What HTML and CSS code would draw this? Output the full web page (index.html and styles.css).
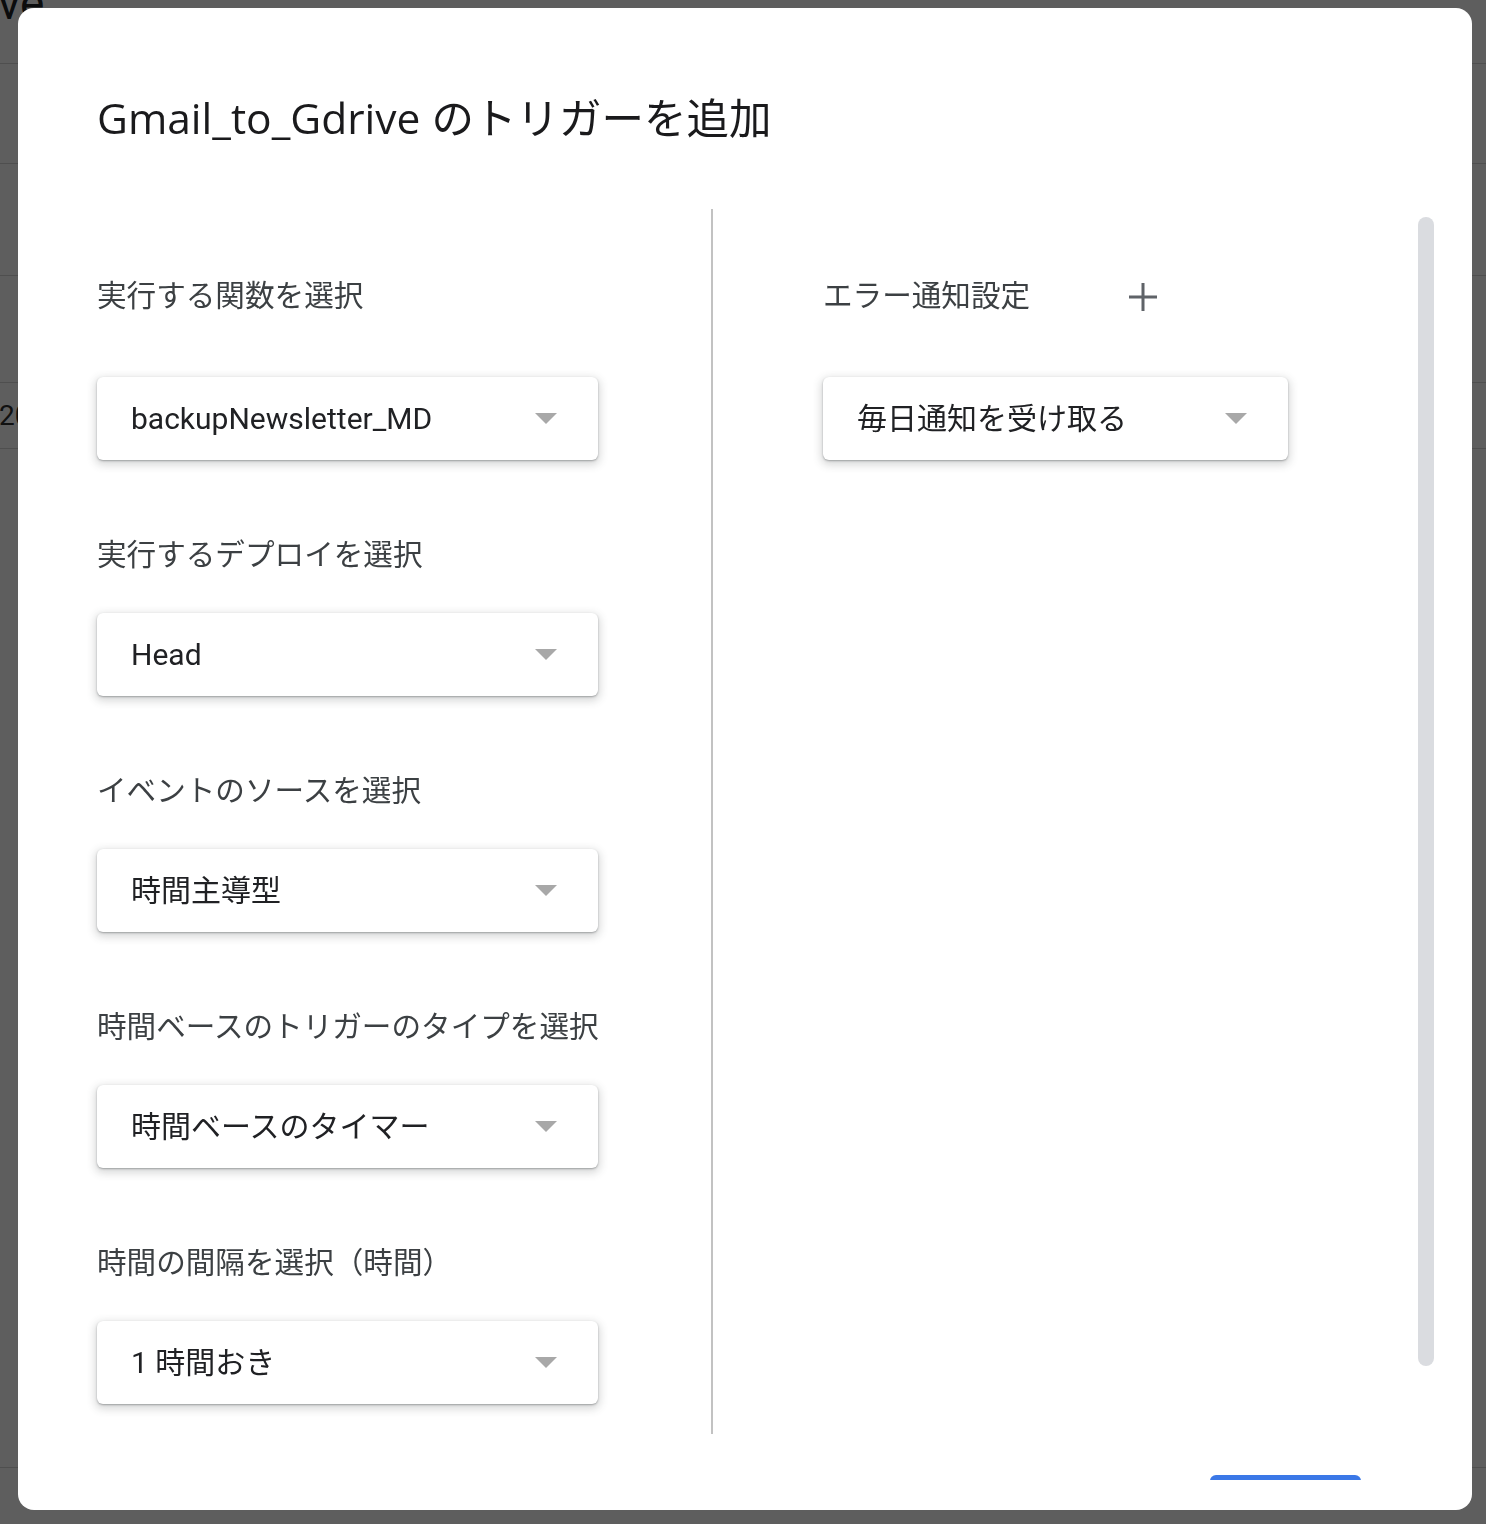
FILE: index.html
```html
<!DOCTYPE html>
<html lang="ja">
<head>
    <meta charset="UTF-8">
    <title>トリガーを追加</title>
    <meta name="viewport" content="width=device-width,initial-scale=1">
    <link rel="stylesheet" href="styles.css">
</head>
<body>
    <!-- page behind the dialog -->
    <div class="page">
        <div class="page-header"><span class="page-title">ve</span></div>
        <div class="page-row row-a"></div>
        <div class="page-row row-b"></div>
        <div class="page-row row-c"></div>
        <div class="page-row row-d"><span class="row-num">2023</span></div>
        <div class="page-row row-e"></div>
    </div>
    <div class="scrim"></div>

    <div class="dialog">
        <h1 class="dialog-title">Gmail_to_Gdrive のトリガーを追加</h1>
        <div class="dialog-scroll">
            <div class="dialog-content">
                <div class="columns">
                    <div class="col col-left">
                        <div class="field">
                            <div class="field-label">実行する関数を選択</div>
                            <div class="select">
                                <span class="select-value">backupNewsletter_MD</span>
                                <span class="select-arrow"></span>
                            </div>
                        </div>
                        <div class="field">
                            <div class="field-label">実行するデプロイを選択</div>
                            <div class="select">
                                <span class="select-value">Head</span>
                                <span class="select-arrow"></span>
                            </div>
                        </div>
                        <div class="field">
                            <div class="field-label">イベントのソースを選択</div>
                            <div class="select">
                                <span class="select-value">時間主導型</span>
                                <span class="select-arrow"></span>
                            </div>
                        </div>
                        <div class="field">
                            <div class="field-label">時間ベースのトリガーのタイプを選択</div>
                            <div class="select">
                                <span class="select-value">時間ベースのタイマー</span>
                                <span class="select-arrow"></span>
                            </div>
                        </div>
                        <div class="field">
                            <div class="field-label">時間の間隔を選択（時間）</div>
                            <div class="select">
                                <span class="select-value">1 時間おき</span>
                                <span class="select-arrow"></span>
                            </div>
                        </div>
                    </div>

                    <div class="col col-right">
                        <div class="field">
                            <div class="field-label label-row">
                                <span>エラー通知設定</span>
                                <svg class="add-icon" width="30" height="30" viewBox="0 0 30 30">
                                    <path d="M15 1v28M1 15h28" stroke="#5f6368" stroke-width="3" fill="none"/>
                                </svg>
                            </div>
                            <div class="select select-narrow">
                                <span class="select-value">毎日通知を受け取る</span>
                                <span class="select-arrow"></span>
                            </div>
                        </div>
                    </div>
                </div>
                <div class="dialog-footer">
                    <button class="save-btn">保存</button>
                </div>
            </div>
            <div class="scroll-track"><div class="scroll-thumb"></div></div>
        </div>
    </div>
</body>
</html>
```

FILE: styles.css
```css
* {
    margin: 0;
    padding: 0;
    box-sizing: border-box;
}

body {
    font-family: Roboto, 'Noto Sans CJK JP', sans-serif;
    background: #fff;
    color: #202124;
    min-height: 100vh;
    overflow: hidden;
}

/* Page behind */
.page {
    width: 100%;
}

.page-header {
    height: 64px;
    border-bottom: 1px solid #d6d6d6;
    overflow: hidden;
}

.page-title {
    display: block;
    font-size: 46px;
    line-height: 1;
    margin-top: -20px;
    margin-left: -2px;
    color: #202124;
}

.page-row {
    border-bottom: 1px solid #d6d6d6;
}

.row-a { height: 100px; }
.row-b { height: 112px; }
.row-c { height: 107px; }
.row-d {
    height: 66px;
    display: flex;
    align-items: center;
}
.row-e { height: 1019px; }

.row-num {
    font-size: 28px;
    color: #303030;
    margin-left: -1px;
}

.scrim {
    position: fixed;
    inset: 0;
    background: rgba(0,0,0,0.63);
}

/* Dialog */
.dialog {
    position: fixed;
    top: 8px;
    left: 18px;
    width: 1454px;
    height: 1502px;
    background: #fff;
    border-radius: 16px;
    overflow: hidden;
}

.dialog-title {
    font-family: 'Open Sans', 'Noto Sans CJK JP', sans-serif;
    font-size: 42.5px;
    font-weight: 400;
    line-height: 50px;
    color: #1a1a1c;
    padding: 85px 0 0 79px;
    margin-bottom: 66px;
}

.dialog-scroll {
    display: flex;
    height: 1271px;
    overflow: hidden;
}

.dialog-content {
    flex: 1;
}

.columns {
    display: flex;
}

.col {
    padding-top: 67px;
}

.col-left {
    width: 695px;
    padding-left: 79px;
    padding-bottom: 30px;
    border-right: 2px solid #c2c2c2;
}

.col-right {
    flex: 1;
    padding-left: 110px;
}

.field + .field {
    margin-top: 75px;
}

.field-label {
    font-size: 29.6px;
    line-height: 40px;
    color: #3c4043;
    margin-bottom: 38px;
}

.field:first-child .field-label {
    margin-bottom: 61px;
}

.label-row {
    display: flex;
    align-items: center;
}

.add-icon {
    margin-left: 98px;
    margin-top: 2px;
}

.select {
    width: 501px;
    height: 83px;
    display: flex;
    align-items: center;
    justify-content: space-between;
    padding: 0 41px 0 34px;
    background: #fff;
    border-radius: 6px;
    box-shadow: 0 1px 2px rgba(60,64,67,0.4), 0 3px 8px 2px rgba(60,64,67,0.2);
}

.select-narrow {
    width: 465px;
}

.select-value {
    font-size: 30px;
    line-height: 1;
    color: #202124;
}

.select-arrow {
    width: 0;
    height: 0;
    border-left: 11px solid transparent;
    border-right: 11px solid transparent;
    border-top: 11px solid #a8a8a8;
}

.dialog-footer {
    display: flex;
    justify-content: flex-end;
    padding: 41px 57px 0 0;
}

.save-btn {
    width: 151px;
    height: 48px;
    background: #3b78e7;
    color: #fff;
    border: none;
    border-radius: 6px;
    font-size: 20px;
    font-family: inherit;
}

.scroll-track {
    width: 16px;
    margin-right: 38px;
}

.scroll-thumb {
    margin-top: 8px;
    height: 1149px;
    border-radius: 8px;
    background: #dadce0;
}
```
